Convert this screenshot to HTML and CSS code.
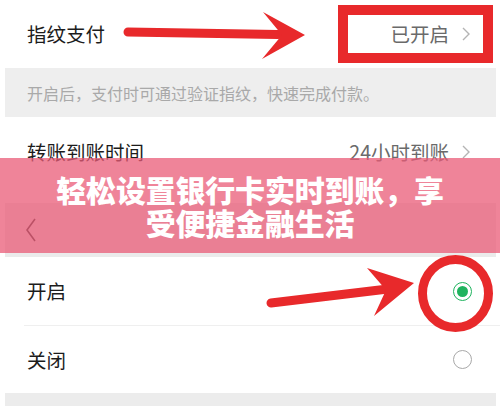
FILE: index.html
```html
<!DOCTYPE html>
<html lang="zh-CN">
<head>
<meta charset="utf-8">
<title>指纹支付设置</title>
<link rel="stylesheet" href="styles.css">
</head>
<body>
<div class="page">
  <div class="row">
    <span class="label">指纹支付</span>
    <span class="value">已开启<svg class="chev" viewBox="0 0 8 14" width="8" height="14"><polyline points="1,1 7,7 1,13"/></svg></span>
  </div>
  <div class="note">开启后，支付时可通过验证指纹，快速完成付款。</div>
  <div class="row row-2">
    <span class="label">转账到账时间</span>
    <span class="value">24小时到账<svg class="chev" viewBox="0 0 8 14" width="8" height="14"><polyline points="1,1 7,7 1,13"/></svg></span>
  </div>
  <div class="spacer"></div>
  <div class="navbar">
    <svg class="back" viewBox="0 0 12 24" width="12" height="24"><polyline points="10,1 2,12 10,23"/></svg>
  </div>
  <div class="options">
    <div class="opt">
      <span class="label">开启</span>
      <span class="radio on"></span>
    </div>
    <div class="opt">
      <span class="label">关闭</span>
      <span class="radio"></span>
    </div>
  </div>
  <div class="foot"></div>

  <div class="banner">
    <span class="line">轻松设置银行卡实时到账，享</span>
    <span class="line">受便捷金融生活</span>
  </div>

  <svg class="marks" viewBox="0 0 500 412" width="500" height="412">
    <line x1="128" y1="32" x2="278" y2="34.5" />
    <polygon points="263,12 305,35 262,59 282,35" />
    <rect class="box" x="343" y="10" width="145" height="48" />
    <line x1="271" y1="303" x2="392" y2="288.5" />
    <polygon points="367,268 414,283 374,316 386,290" />
    <ellipse class="ring" cx="455.5" cy="293.5" rx="33" ry="34" />
  </svg>
</div>
</body>
</html>
```
FILE: styles.css
```css
html, body {
  margin: 0;
  padding: 0;
  background: #ffffff;
}

body {
  font-family: "Noto Sans CJK SC", "Noto Sans", "Liberation Sans", sans-serif;
  color: #1c1c1c;
}

.page {
  position: relative;
  width: 500px;
  height: 412px;
  overflow: hidden;
  display: flex;
  flex-direction: column;
}

.row {
  height: 68px;
  padding: 0 30px 0 27px;
  display: flex;
  align-items: center;
  justify-content: space-between;
  flex-shrink: 0;
}

.row-2 {
  height: 70px;
}

.label {
  font-size: 19.5px;
  line-height: 1;
  color: #1c1c1c;
}

.value {
  font-size: 19.5px;
  line-height: 1;
  color: #6a6a6a;
  display: flex;
  align-items: center;
  gap: 13px;
}

.chev {
  fill: none;
  stroke: #b4b4b4;
  stroke-width: 1.4;
}

.note {
  margin: 0 4px 0 5px;
  height: 49px;
  background: #eeeeee;
  display: flex;
  align-items: center;
  padding-left: 22px;
  font-size: 16px;
  color: #a9a9a9;
  flex-shrink: 0;
}

.spacer {
  height: 16px;
  flex-shrink: 0;
}

.navbar {
  margin: 0 4px 0 5px;
  height: 54px;
  background: #ebebeb;
  display: flex;
  align-items: center;
  padding-left: 20px;
  flex-shrink: 0;
}

.back {
  fill: none;
  stroke: #333333;
  stroke-width: 1.6;
}

.options {
  display: flex;
  flex-direction: column;
  flex-shrink: 0;
}

.opt {
  height: 68px;
  padding: 0 28px 0 27px;
  display: flex;
  align-items: center;
  justify-content: space-between;
}

.opt + .opt {
  border-top: 1px solid #efefef;
  margin-left: 24px;
  padding-left: 3px;
  height: 67px;
}

.radio {
  width: 19px;
  height: 19px;
  box-sizing: border-box;
  border-radius: 50%;
  border: 1.5px solid #a8a8a8;
  display: flex;
  align-items: center;
  justify-content: center;
}

.radio.on {
  border-color: #1fb35e;
}

.radio.on::after {
  content: "";
  width: 11px;
  height: 11px;
  border-radius: 50%;
  background: #1fb35e;
}

.foot {
  margin: 0 4px 0 5px;
  height: 13px;
  background: #ececec;
  flex-shrink: 0;
}

.banner {
  position: absolute;
  left: 0;
  top: 158px;
  width: 500px;
  height: 95px;
  background: rgba(234, 91, 119, 0.75);
  display: flex;
  flex-direction: column;
  align-items: center;
  justify-content: center;
  color: #ffffff;
  font-size: 30px;
  font-weight: 900;
  line-height: 33px;
  letter-spacing: -0.2px;
}

.line {
  display: block;
}

.marks {
  position: absolute;
  left: 0;
  top: 0;
  pointer-events: none;
}

.marks line {
  stroke: #e8292b;
  stroke-width: 9;
  stroke-linecap: round;
}

.marks polygon {
  fill: #e8292b;
}

.marks .box,
.marks .ring {
  fill: none;
  stroke: #e8292b;
  stroke-width: 10;
}

.marks .ring {
  stroke-width: 9;
}
```
